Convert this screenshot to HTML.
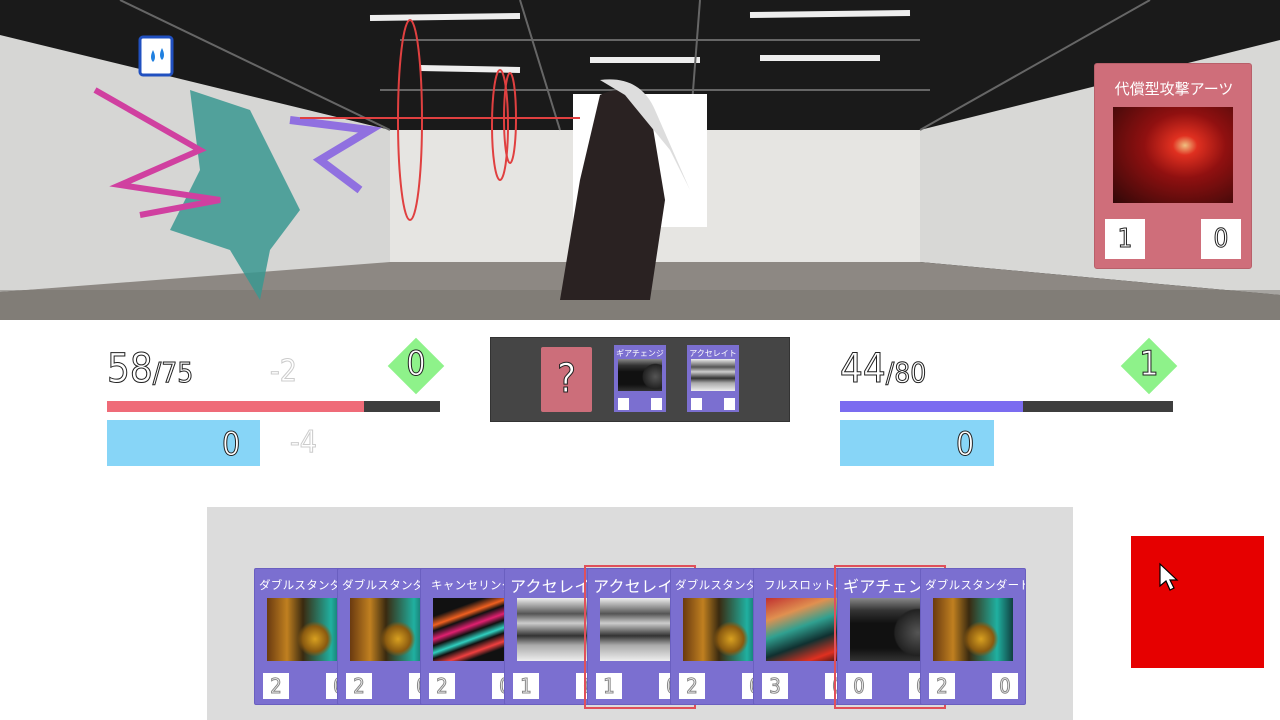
<!DOCTYPE html>
<html><head><meta charset="utf-8"><style>
*{margin:0;padding:0;box-sizing:border-box}
body{width:1280px;height:720px;overflow:hidden;background:#fff;position:relative;font-family:"Liberation Sans","Noto Sans CJK JP",sans-serif}
.a{position:absolute}
.ol{color:#fff;-webkit-text-stroke:1px #222;font-family:"DejaVu Sans Condensed","Liberation Sans","Noto Sans CJK JP",sans-serif}
.gh{color:#fff;-webkit-text-stroke:1px #ccc;font-family:"DejaVu Sans Condensed",sans-serif}
.card{position:absolute;width:106px;height:137px;background:#7b6fd0;border:1px solid #6a5fc0;border-radius:2px;overflow:hidden}
.card .t{position:absolute;left:4px;top:8px;color:#fff;white-space:nowrap;font-size:11.5px;letter-spacing:.3px}
.card .t.big{font-size:16px;top:4px;left:5px}
.card .im{position:absolute;left:12px;top:29px;width:80px;height:63px}
.card .n{position:absolute;top:104px;width:26px;height:26px;background:#fff;font-size:20px;text-align:center;line-height:26px;color:#fff;-webkit-text-stroke:1px #888;font-family:"DejaVu Sans Condensed",sans-serif}
.sel{position:absolute;border:2px solid #e0505a;width:112px;height:144px}
.gear{background:radial-gradient(circle at 60% 65%,#d8a020 0,#8a5a10 20%,transparent 28%),linear-gradient(90deg,#6a3a10,#c08020 25%,#3a2a10 45%,#20b0a0 80%,#104040)}
.neon{background:linear-gradient(160deg,#111 20%,#f06020 30%,#111 36%,#e02070 45%,#111 52%,#30d0c0 60%,#111 66%,#f04040 75%,#111 82%)}
.acc{background:linear-gradient(180deg,#eee,#555 25%,#ccc 40%,#333 60%,#aaa 75%,#eee)}
.full{background:linear-gradient(160deg,#c03030,#e09050 25%,#30a090 45%,#103030 65%,#e03020 85%,#201010)}
.gch{background:radial-gradient(circle at 85% 55%,#555 0,#222 30%,transparent 32%),linear-gradient(180deg,#888,#333 20%,#111 40%,#111 80%,#333)}
</style></head><body>
<svg class="a" style="left:0;top:0" width="1280" height="320">
<rect width="1280" height="320" fill="#1a1a1a"/>
<polygon points="0,35 390,130 390,265 0,292" fill="#d6d6d4"/>
<polygon points="920,130 1280,40 1280,295 920,262" fill="#d8d8d6"/>
<rect x="390" y="130" width="530" height="135" fill="#e6e5e2"/>
<polygon points="0,292 390,262 920,262 1280,295 1280,320 0,320" fill="#8d8883"/>
<rect x="0" y="290" width="1280" height="30" fill="#76716c" opacity=".5"/>
<g stroke="#eee" stroke-width="6"><line x1="370" y1="18" x2="520" y2="16"/><line x1="750" y1="15" x2="910" y2="13"/><line x1="590" y1="60" x2="700" y2="60"/><line x1="760" y1="58" x2="880" y2="58"/><line x1="420" y1="68" x2="520" y2="70"/></g>
<g stroke="#666" stroke-width="2" fill="none"><path d="M120 0 L390 130 M1150 0 L920 130 M520 0 L560 130 M700 0 L690 130 M400 40 L920 40 M380 90 L930 90"/></g>
<rect x="573" y="94" width="134" height="133" fill="#fff"/>
<path d="M600 95 Q630 80 650 110 L665 200 L650 300 L560 300 L580 180Z" fill="#2a2222"/>
<path d="M600 80 Q640 75 655 110 L690 190 L670 150 L625 95Z" fill="#ddd"/>
<path d="M190 90 L250 110 L270 150 L300 210 L270 250 L260 300 L230 250 L170 230 L200 170Z" fill="#3a9890" opacity=".85"/>
<path d="M95 90 L200 150 L120 185 L220 200 L140 215" stroke="#d040a0" stroke-width="6" fill="none"/>
<path d="M290 120 L370 130 L320 160 L360 190" stroke="#9070e0" stroke-width="8" fill="none"/>
<g stroke="#e04040" stroke-width="2" fill="none"><ellipse cx="410" cy="120" rx="12" ry="100"/><ellipse cx="500" cy="125" rx="8" ry="55"/><ellipse cx="510" cy="118" rx="6" ry="45"/><line x1="300" y1="118" x2="580" y2="118"/></g>
<rect x="140" y="37" width="32" height="38" rx="3" fill="#fff" stroke="#2050c0" stroke-width="3"/>
<path d="M153 50 q-4 8 0 12 q4-4 0-12 M162 48 q-4 8 0 12 q4-4 0-12" fill="#2080e0"/>
</svg>
<div class="a" style="left:1094px;top:63px;width:158px;height:206px;background:#cf6e7a;border-radius:3px;border:1px solid #b8606a">
<div class="a" style="left:0;width:158px;top:14px;text-align:center;color:#fff;font-size:15px">代償型攻撃アーツ</div>
<div class="a" style="left:18px;top:43px;width:120px;height:96px;background:radial-gradient(ellipse at 60% 40%,#f0c080 0,#e03020 12%,#901010 40%,#300808 100%)"></div>
<div class="a ol" style="left:10px;top:155px;width:40px;height:40px;background:#fff;font-size:26px;text-align:center;line-height:40px">1</div>
<div class="a ol" style="left:106px;top:155px;width:40px;height:40px;background:#fff;font-size:26px;text-align:center;line-height:40px">0</div>
</div>

<div class="a ol" style="left:107px;top:346px;font-size:40px">58<span style="font-size:28px">/75</span></div>
<div class="a gh" style="left:270px;top:354px;font-size:30px">-2</div>
<div class="a" style="left:396px;top:346px;width:40px;height:40px;background:#8ef28a;transform:rotate(45deg)"></div>
<div class="a ol" style="left:396px;top:344px;width:40px;text-align:center;font-size:34px">0</div>
<div class="a" style="left:107px;top:401px;width:333px;height:11px;background:#3e3e3e"><div style="width:257px;height:11px;background:#ef6b78"></div></div>
<div class="a" style="left:107px;top:420px;width:153px;height:46px;background:#87d5f7"></div>
<div class="a ol" style="left:222px;top:425px;font-size:32px">0</div>
<div class="a gh" style="left:290px;top:425px;font-size:30px">-4</div>

<div class="a ol" style="left:840px;top:346px;font-size:40px">44<span style="font-size:28px">/80</span></div>
<div class="a" style="left:1129px;top:346px;width:40px;height:40px;background:#8ef28a;transform:rotate(45deg)"></div>
<div class="a ol" style="left:1129px;top:344px;width:40px;text-align:center;font-size:34px">1</div>
<div class="a" style="left:840px;top:401px;width:333px;height:11px;background:#3e3e3e"><div style="width:183px;height:11px;background:#7b6cf0"></div></div>
<div class="a" style="left:840px;top:420px;width:154px;height:46px;background:#87d5f7"></div>
<div class="a ol" style="left:956px;top:425px;font-size:32px">0</div>

<div class="a" style="left:490px;top:337px;width:300px;height:85px;background:#454545;border:1px solid #333"></div>
<div class="a ol" style="left:541px;top:347px;width:51px;height:65px;background:#cc6e7a;border-radius:2px;text-align:center;font-size:40px;line-height:65px">?</div>
<div class="a" style="left:614px;top:345px;width:52px;height:67px;background:#7b6fd0">
<div class="a" style="left:0;width:52px;top:3px;text-align:center;color:#fff;font-size:8px">ギアチェンジ</div>
<div class="a gch" style="left:4px;top:14px;width:44px;height:32px"></div>
<div class="a" style="left:4px;top:53px;width:11px;height:12px;background:#fff"></div><div class="a" style="left:37px;top:53px;width:11px;height:12px;background:#fff"></div></div>
<div class="a" style="left:687px;top:345px;width:52px;height:67px;background:#7b6fd0">
<div class="a" style="left:0;width:52px;top:3px;text-align:center;color:#fff;font-size:8px">アクセレイト</div>
<div class="a acc" style="left:4px;top:14px;width:44px;height:32px"></div>
<div class="a" style="left:4px;top:53px;width:11px;height:12px;background:#fff"></div><div class="a" style="left:37px;top:53px;width:11px;height:12px;background:#fff"></div></div>

<div class="a" style="left:207px;top:507px;width:866px;height:213px;background:#dcdcdc"></div>
<div class="a" style="left:1131px;top:536px;width:133px;height:132px;background:#e60000"></div>
<svg class="a" style="left:1158px;top:562px" width="22" height="30"><path d="M2 2 L2 24 L8 19 L12 28 L16 26 L12 18 L19 18Z" fill="#fff" stroke="#000" stroke-width="1.2"/></svg>

<div class="card" style="left:254px;top:568px"><div class="t">ダブルスタンダード</div><div class="im gear"></div><div class="n" style="left:8px">2</div><div class="n" style="left:71px">0</div></div>
<div class="card" style="left:337px;top:568px"><div class="t">ダブルスタンダード</div><div class="im gear"></div><div class="n" style="left:8px">2</div><div class="n" style="left:71px">0</div></div>
<div class="card" style="left:420px;top:568px"><div class="t" style="left:10px">キャンセリング</div><div class="im neon"></div><div class="n" style="left:8px">2</div><div class="n" style="left:71px">0</div></div>
<div class="card" style="left:504px;top:568px"><div class="t big">アクセレイト</div><div class="im acc"></div><div class="n" style="left:8px">1</div><div class="n" style="left:71px">0</div></div>
<div class="sel" style="left:584px;top:565px"></div>
<div class="card" style="left:587px;top:568px"><div class="t big">アクセレイト</div><div class="im acc"></div><div class="n" style="left:8px">1</div><div class="n" style="left:71px">0</div></div>
<div class="card" style="left:670px;top:568px"><div class="t">ダブルスタンダード</div><div class="im gear"></div><div class="n" style="left:8px">2</div><div class="n" style="left:71px">0</div></div>
<div class="card" style="left:753px;top:568px"><div class="t" style="left:10px">フルスロットル</div><div class="im full"></div><div class="n" style="left:8px">3</div><div class="n" style="left:71px">0</div></div>
<div class="sel" style="left:834px;top:565px"></div>
<div class="card" style="left:837px;top:568px"><div class="t big">ギアチェンジ</div><div class="im gch"></div><div class="n" style="left:8px">0</div><div class="n" style="left:71px">0</div></div>
<div class="card" style="left:920px;top:568px"><div class="t">ダブルスタンダード</div><div class="im gear"></div><div class="n" style="left:8px">2</div><div class="n" style="left:71px">0</div></div>
</body></html>
